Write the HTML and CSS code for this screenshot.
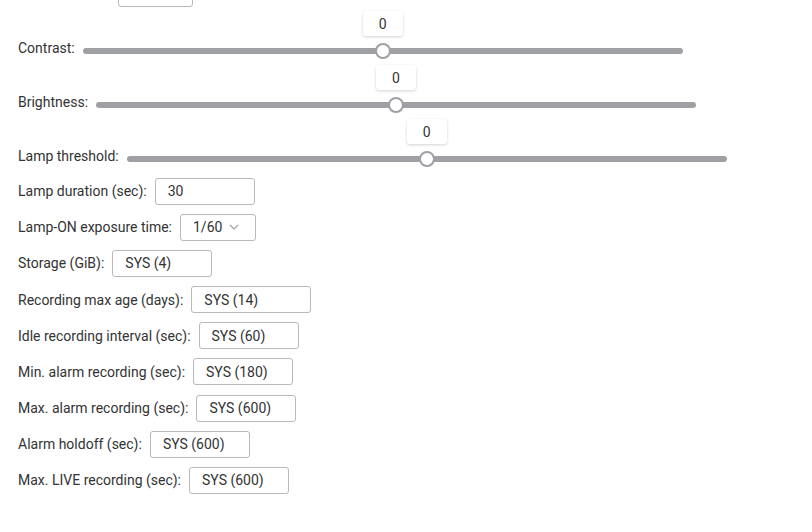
FILE: index.html
```html
<!DOCTYPE html>
<html lang="en">
<head>
  <meta charset="UTF-8" />
  <title>Camera Settings</title>
  <link rel="stylesheet" href="styles.css">
</head>
<body>
  <div class="settings">
    <!-- row above is scrolled out of view, only its box edge shows -->
    <div class="row">
      <label class="hidden-label"></label>
      <div class="select short"></div>
    </div>

    <div class="slider-row">
      <label>Contrast:</label>
      <div class="slider">
        <div class="track"></div>
        <div class="thumb" style="left: 50%;"></div>
        <div class="tip" style="left: 50%;">0</div>
      </div>
    </div>
    <div class="slider-row">
      <label>Brightness:</label>
      <div class="slider">
        <div class="track"></div>
        <div class="thumb" style="left: 50%;"></div>
        <div class="tip" style="left: 50%;">0</div>
      </div>
    </div>
    <div class="slider-row">
      <label>Lamp threshold:</label>
      <div class="slider">
        <div class="track"></div>
        <div class="thumb" style="left: 50%;"></div>
        <div class="tip" style="left: 50%;">0</div>
      </div>
    </div>

    <div class="row">
      <label>Lamp duration (sec):</label>
      <input class="field" type="text" value="30">
    </div>
    <div class="row">
      <label>Lamp-ON exposure time:</label>
      <div class="select">
        <span>1/60</span>
        <svg width="10" height="6" viewBox="0 0 10 6"><polyline points="1,1 5,5 9,1" fill="none" stroke="#a0a0a0" stroke-width="1.2"/></svg>
      </div>
    </div>
    <div class="row">
      <label>Storage (GiB):</label>
      <input class="field" type="text" placeholder="SYS (4)">
    </div>
    <div class="row">
      <label>Recording max age (days):</label>
      <input class="field wide" type="text" placeholder="SYS (14)">
    </div>
    <div class="row">
      <label>Idle recording interval (sec):</label>
      <input class="field" type="text" placeholder="SYS (60)">
    </div>
    <div class="row">
      <label>Min. alarm recording (sec):</label>
      <input class="field" type="text" placeholder="SYS (180)">
    </div>
    <div class="row">
      <label>Max. alarm recording (sec):</label>
      <input class="field" type="text" placeholder="SYS (600)">
    </div>
    <div class="row">
      <label>Alarm holdoff (sec):</label>
      <input class="field" type="text" placeholder="SYS (600)">
    </div>
    <div class="row">
      <label>Max. LIVE recording (sec):</label>
      <input class="field" type="text" placeholder="SYS (600)">
    </div>
  </div>
</body>
</html>
```

FILE: styles.css
```css
body {
  margin: 0;
  background: #fff;
  font-family: Roboto, "Liberation Sans", sans-serif;
  font-size: 14px;
  color: #333;
  overflow: hidden;
}
.settings {
  display: flex;
  flex-direction: column;
  padding: 0 18px;
  margin-top: -25px;
}
.row {
  display: flex;
  align-items: center;
  gap: 8px;
  height: 36.15px;
}
.row label {
  line-height: 16px;
}
.hidden-label {
  width: 92px;
}
.field {
  box-sizing: border-box;
  width: 100px;
  height: 27px;
  border: 1px solid #b9b9b9;
  border-radius: 3px;
  padding: 0 12px;
  font-family: inherit;
  font-size: 14px;
  color: #333;
  background: #fff;
  outline: none;
}
.field::placeholder {
  color: #333;
  opacity: 1;
}
.field.wide {
  width: 120px;
}
.select {
  box-sizing: border-box;
  width: 76px;
  height: 27px;
  border: 1px solid #b9b9b9;
  border-radius: 3px;
  padding: 0 16px 0 12px;
  display: flex;
  align-items: center;
  justify-content: space-between;
  color: #333;
}
.select.short {
  width: 75px;
}
.slider-row {
  display: flex;
  align-items: flex-end;
  gap: 8px;
  height: 54px;
  box-sizing: border-box;
  padding: 32px 0 6px;
}
.slider-row label {
  line-height: 16px;
  padding-bottom: 3px;
}
.slider {
  position: relative;
  width: 600px;
  height: 16px;
  display: flex;
  align-items: center;
}
.track {
  width: 100%;
  height: 6px;
  border-radius: 3px;
  background: #9ea0a4;
}
.thumb {
  position: absolute;
  top: 0;
  width: 16px;
  height: 16px;
  box-sizing: border-box;
  margin-left: -8px;
  border: 2px solid #9ea0a4;
  border-radius: 50%;
  background: #fff;
}
.tip {
  position: absolute;
  bottom: 23px;
  width: 40px;
  height: 25px;
  margin-left: -20px;
  border-radius: 3px;
  background: #fff;
  box-shadow: 0 1px 3px rgba(0, 0, 0, 0.18);
  display: flex;
  align-items: center;
  justify-content: center;
  color: #333;
}
```
